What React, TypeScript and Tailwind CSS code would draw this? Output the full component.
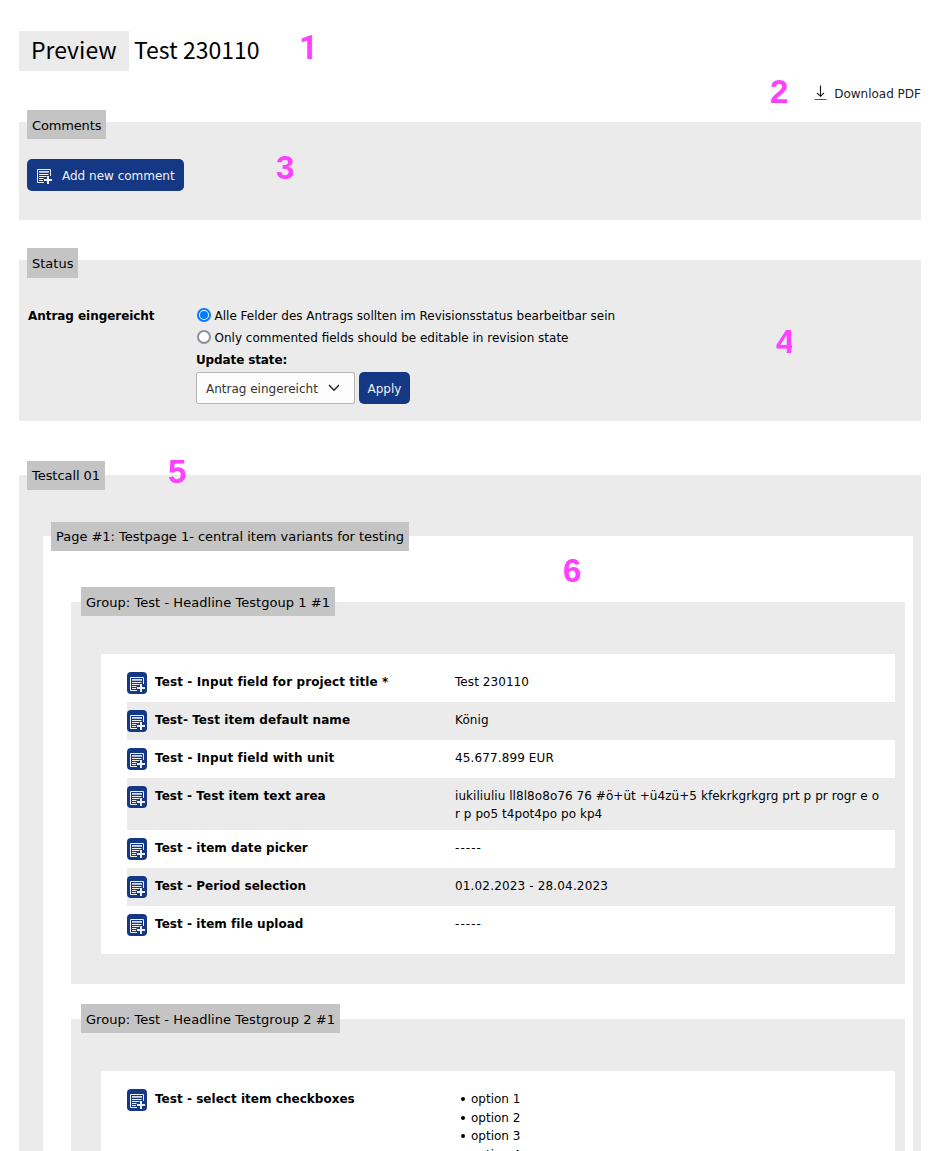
import type { ReactNode } from "react";

function CommentIcon() {
  return (
    <svg width="16" height="15" viewBox="0 0 16 15" fill="none" className="block shrink-0">
      <path d="M13.5 7V0.5H0.5V13.5H7" stroke="#f0f0f0" />
      <path d="M2 2.9H12" stroke="#f0f0f0" strokeWidth="1.6" />
      <path d="M2 5.5H11.5M2 7.5H9.5M2 9.5H6.5M2 11.5H6" stroke="#f0f0f0" strokeWidth="1" />
      <path d="M11 7V15M7 11H15" stroke="#f0f0f0" strokeWidth="2" />
    </svg>
  );
}

function DownloadIcon() {
  return (
    <svg width="14" height="16" viewBox="0 0 14 16" fill="none" className="block shrink-0">
      <path d="M6.5 0.5V11M3 7.8L6.5 11.3L10 7.8" stroke="#111" strokeWidth="1.1" />
      <path d="M0.5 14.5H12.5" stroke="#555" strokeWidth="1" />
    </svg>
  );
}

function Legend({ children, className = "" }: { children: ReactNode; className?: string }) {
  return (
    <div className={`flex h-[29px] shrink-0 items-center bg-[#c4c4c4] px-[5px] text-[13px] whitespace-nowrap ${className}`}>
      <span>{children}</span>
    </div>
  );
}

function Radio({ checked }: { checked?: boolean }) {
  return (
    <span
      className={`flex size-[14px] shrink-0 items-center justify-center rounded-full border-2 bg-white ${
        checked ? "border-[#007aff]" : "border-[#8f8f9d]"
      }`}
    >
      {checked && <span className="size-[8px] rounded-full bg-[#007aff]" />}
    </span>
  );
}

type RowData = {
  label: string;
  labelClass?: string;
  value: ReactNode;
  valueClass?: string;
};

function ItemRow({ row, striped }: { row: RowData; striped: boolean }) {
  return (
    <div className={`flex py-2 ${striped ? "bg-[#ebebeb]" : ""}`}>
      <button className="flex h-[22px] w-5 shrink-0 rounded-[4px] bg-[#153884] pt-[5px] pl-[3px]">
        <CommentIcon />
      </button>
      <div className={`-mb-px ml-2 w-[300px] shrink-0 pt-px font-bold leading-[18px] ${row.labelClass ?? ""}`}>{row.label}</div>
      <div className={`-mb-px flex-1 pt-px leading-[18px] whitespace-nowrap ${row.valueClass ?? ""}`}>{row.value}</div>
    </div>
  );
}

function Group({ title, titleClass, rows }: { title: string; titleClass: string; rows: RowData[] }) {
  return (
    <section className="flex flex-col items-start bg-[#ebebeb] px-[10px] pb-[30px]">
      <Legend className={`-mt-[15px] pt-[2px] ${titleClass}`}>{title}</Legend>
      <div className="mt-[38px] w-full pl-5">
        <div className="bg-white py-[10px] pl-[26px]">
          {rows.map((row, i) => (
            <ItemRow key={row.label} row={row} striped={i % 2 === 1} />
          ))}
        </div>
      </div>
    </section>
  );
}

const groupOne: RowData[] = [
  { label: "Test - Input field for project title *", labelClass: "tracking-[0.11px]", value: "Test 230110", valueClass: "tracking-[0.07px]" },
  { label: "Test- Test item default name", labelClass: "tracking-[0.07px]", value: "König", valueClass: "tracking-[0.12px]" },
  { label: "Test - Input field with unit", labelClass: "tracking-[0.12px]", value: "45.677.899 EUR", valueClass: "tracking-[0.12px]" },
  {
    label: "Test - Test item text area",
    labelClass: "tracking-[0.06px]",
    value: (
      <>
        iukiliuliu ll8l8o8o76 76 #ö+üt +ü4zü+5 kfekrkgrkgrg prt p pr rogr e o
        <br />r p po5 t4pot4po po kp4
      </>
    ),
    valueClass: "tracking-[0.058px]",
  },
  { label: "Test - item date picker", labelClass: "tracking-[0.04px]", value: "-----", valueClass: "tracking-[1.05px]" },
  { label: "Test - Period selection", labelClass: "tracking-[0.04px]", value: "01.02.2023 - 28.04.2023", valueClass: "tracking-[0.16px]" },
  { label: "Test - item file upload", labelClass: "tracking-[0.04px]", value: "-----", valueClass: "tracking-[1.05px]" },
];

const groupTwo: RowData[] = [
  {
    label: "Test - select item checkboxes",
    labelClass: "tracking-[0.03px]",
    value: (
      <ul className="leading-[18.5px]">
        {["option 1", "option 2", "option 3", "option 4"].map((o) => (
          <li key={o} className="flex items-center">
            <span className="mr-[6px] ml-[6px] size-1 rounded-full bg-black" />
            {o}
          </li>
        ))}
      </ul>
    ),
  },
];

const markerBase = "absolute text-[33px] leading-[33px] font-bold text-[#ff40ff]";

export default function App() {
  return (
    <div className="relative h-[1151px] w-[942px] overflow-hidden bg-white pl-[19px] pr-[21px] font-['DejaVu_Sans',Verdana,sans-serif] text-[12px] text-black">
      <h1 className="flex h-[71px] items-end pt-[31px] font-['Noto_Sans_CJK_SC','Noto_Sans',sans-serif] text-[23px] leading-[36px]">
        <span className="h-10 w-[110px] bg-[#ebebeb] pl-3">Preview</span>
        <span className="ml-[5px] h-10">Test 230110</span>
      </h1>

      <div className="flex h-[51px] items-start justify-end pt-[14px]">
        <a className="flex gap-[6px] leading-[18px] text-[#222]">
          <DownloadIcon />
          Download PDF
        </a>
      </div>

      <section className="flex h-[98px] flex-col items-start bg-[#ebebeb] px-2">
        <Legend className="-mt-3 pt-[2px] tracking-[-0.15px]">Comments</Legend>
        <button className="mt-5 flex h-8 w-[157px] shrink-0 items-center rounded-[5px] bg-[#153884] pt-[2px] pl-[10px] text-[#f0f0f0]">
          <CommentIcon />
          <span className="ml-[9px] whitespace-nowrap">Add new comment</span>
        </button>
      </section>

      <section className="mt-10 flex h-[161px] flex-col items-start bg-[#ebebeb] px-2">
        <Legend className="-mt-3 h-[30px] pt-[2px]">Status</Legend>
        <div className="mt-[27px] flex w-full pl-px">
          <div className="w-[168px] shrink-0 font-bold leading-[22px] tracking-[-0.05px]">Antrag eingereicht</div>
          <div className="leading-[22px]">
            <label className="flex items-center">
              <span className="-mt-[2px] mr-[3.5px] ml-px">
                <Radio checked />
              </span>
              <span>Alle Felder des Antrags sollten im Revisionsstatus bearbeitbar sein</span>
            </label>
            <label className="flex items-center">
              <span className="-mt-[2px] mr-[3.5px] ml-px">
                <Radio />
              </span>
              <span>Only commented fields should be editable in revision state</span>
            </label>
            <div className="font-bold tracking-[-0.12px]">Update state:</div>
            <div className="mt-px flex gap-1">
              <div className="flex h-8 w-[159px] items-center justify-between rounded-[2px] border border-[#b5b5b5] bg-[#fdfdfd] pr-[14px] pl-[9px] text-[#333]">
                <span className="pt-[2px]">Antrag eingereicht</span>
                <svg width="12" height="8" viewBox="0 0 12 8" fill="none">
                  <path d="M1 1L6 6.3L11 1" stroke="#222" strokeWidth="1.4" />
                </svg>
              </div>
              <button className="h-8 w-[51px] rounded-[5px] bg-[#153884] pt-[2px] text-[#f0f0f0]">Apply</button>
            </div>
          </div>
        </div>
      </section>

      <section className="mt-[54px] flex flex-col items-start bg-[#ebebeb] pr-2 pl-2">
        <Legend className="-mt-[14px] tracking-[-0.05px]">Testcall 01</Legend>
        <div className="mt-[46px] ml-4 flex w-[870px] flex-col items-start bg-white pr-2">
          <Legend className="-mt-[14px] ml-2 tracking-[-0.03px]">Page #1: Testpage 1- central item variants for testing</Legend>
          <div className="mt-[51px] ml-7 flex w-[834px] flex-col gap-[35px]">
            <Group title="Group: Test - Headline Testgoup 1 #1" titleClass="tracking-[0.05px]" rows={groupOne} />
            <Group title="Group: Test - Headline Testgroup 2 #1" titleClass="tracking-[0.045px]" rows={groupTwo} />
          </div>
        </div>
      </section>

      <span className={`${markerBase} top-[31px] left-[299px] font-[Roboto,sans-serif]`}>1</span>
      <span className={`${markerBase} top-[75px] left-[770px] font-['Liberation_Sans',Arial,sans-serif]`}>2</span>
      <span className={`${markerBase} top-[151px] left-[276px] font-['Liberation_Sans',Arial,sans-serif]`}>3</span>
      <span className={`${markerBase} top-[325px] left-[776px] w-4 overflow-hidden font-['Liberation_Sans',Arial,sans-serif]`}>4</span>
      <span className={`${markerBase} top-[455px] left-[168px] font-['Liberation_Sans',Arial,sans-serif]`}>5</span>
      <span className={`${markerBase} top-[554px] left-[563px] font-['Liberation_Sans',Arial,sans-serif]`}>6</span>
    </div>
  );
}
